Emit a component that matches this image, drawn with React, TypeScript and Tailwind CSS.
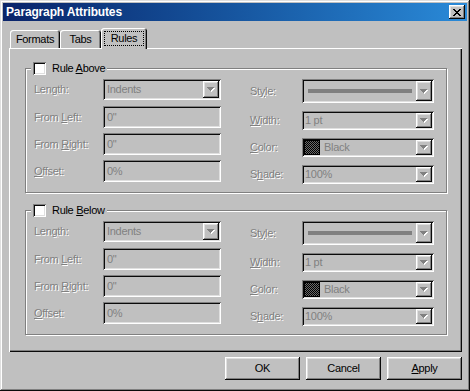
import React from "react";

const RAISED =
  "shadow-[inset_-1px_-1px_#0a0a0a,inset_1px_1px_#ffffff,inset_-2px_-2px_#808080,inset_2px_2px_#dfdfdf]";
const SUNKEN =
  "shadow-[inset_1px_1px_#808080,inset_-1px_-1px_#ffffff,inset_2px_2px_#0a0a0a,inset_-2px_-2px_#dfdfdf]";
const DIS = "text-[#808080] [text-shadow:1px_1px_0_#ffffff]";

function Lbl({ a, u, b }: { a: string; u: string; b: string }) {
  return (
    <span className={`whitespace-pre ${DIS}`}>
      {a}
      <span className="underline underline-offset-[1px]">{u}</span>
      {b}
    </span>
  );
}

function Arrow() {
  return (
    <svg width="8" height="5" viewBox="0 0 8 5" shapeRendering="crispEdges">
      <path d="M1 1h7v1H1zM2 2h5v1H2zM3 3h3v1H3zM4 4h1v1H4z" fill="#ffffff" />
      <path d="M0 0h7v1H0zM1 1h5v1H1zM2 2h3v1H2zM3 3h1v1H3z" fill="#808080" />
    </svg>
  );
}

function DropBtn() {
  return (
    <div className={`w-[16px] h-full shrink-0 flex items-center justify-center bg-[#c0c0c0] ${RAISED}`}>
      <Arrow />
    </div>
  );
}

function Swatch() {
  return (
    <svg width="16" height="15" viewBox="0 0 16 15" shapeRendering="crispEdges" className="shrink-0">
      <defs>
        <pattern id="chk" width="2" height="2" patternUnits="userSpaceOnUse">
          <rect width="2" height="2" fill="#6a6a6a" />
          <rect width="1" height="1" fill="#000000" />
          <rect x="1" y="1" width="1" height="1" fill="#000000" />
        </pattern>
      </defs>
      <rect x="0" y="0" width="16" height="15" fill="url(#chk)" />
      <rect x="0.5" y="0.5" width="15" height="14" fill="none" stroke="#000000" />
    </svg>
  );
}

function LeftRows() {
  return (
    <div className="flex flex-col gap-[5px] w-[187px] shrink-0">
      <div className="flex items-start h-[22px]">
        <div className="w-[69px] h-[21px] flex items-center">
          <Lbl a="Len" u="g" b="th:" />
        </div>
        <div className={`w-[118px] h-[21px] flex p-[2px] bg-[#c0c0c0] ${SUNKEN}`}>
          <div className="flex-1 flex items-center pl-[2px] text-[#808080]">Indents</div>
          <DropBtn />
        </div>
      </div>
      <div className="flex items-center h-[22px]">
        <div className="w-[69px]">
          <Lbl a="From " u="L" b="eft:" />
        </div>
        <div className={`w-[118px] h-[22px] flex items-center pl-[4px] text-[#808080] ${SUNKEN}`}>0"</div>
      </div>
      <div className="flex items-center h-[22px]">
        <div className="w-[69px]">
          <Lbl a="From " u="R" b="ight:" />
        </div>
        <div className={`w-[118px] h-[22px] flex items-center pl-[4px] text-[#808080] ${SUNKEN}`}>0"</div>
      </div>
      <div className="flex items-center h-[22px]">
        <div className="w-[69px]">
          <Lbl a="" u="O" b="ffset:" />
        </div>
        <div className={`w-[118px] h-[22px] flex items-center pl-[4px] text-[#808080] ${SUNKEN}`}>0%</div>
      </div>
    </div>
  );
}

function RightRows() {
  return (
    <div className="flex flex-col gap-[8px] ml-[29px] w-[184px] shrink-0">
      <div className="flex items-center h-[24px]">
        <div className="w-[52px]">
          <Lbl a="St" u="y" b="le:" />
        </div>
        <div className={`w-[132px] h-[24px] flex p-[2px] bg-[#c0c0c0] ${SUNKEN}`}>
          <div className="flex-1 flex items-center px-[4px]">
            <div className="h-[4px] w-full bg-[#808080]" />
          </div>
          <DropBtn />
        </div>
      </div>
      <div className="flex items-center h-[19px]">
        <div className="w-[52px]">
          <Lbl a="" u="W" b="idth:" />
        </div>
        <div className={`w-[132px] h-[19px] flex p-[2px] bg-[#c0c0c0] ${SUNKEN}`}>
          <div className="flex-1 flex items-center pl-[1px] text-[#808080]">1 pt</div>
          <DropBtn />
        </div>
      </div>
      <div className="flex items-center h-[19px]">
        <div className="w-[52px]">
          <Lbl a="" u="C" b="olor:" />
        </div>
        <div className={`w-[132px] h-[19px] flex p-[2px] bg-[#c0c0c0] ${SUNKEN}`}>
          <div className="flex-1 flex items-center gap-[4px] text-[#808080]">
            <Swatch />
            <span>Black</span>
          </div>
          <DropBtn />
        </div>
      </div>
      <div className="flex items-center h-[19px]">
        <div className="w-[52px]">
          <Lbl a="S" u="h" b="ade:" />
        </div>
        <div className={`w-[132px] h-[19px] flex p-[2px] bg-[#c0c0c0] ${SUNKEN}`}>
          <div className="flex-1 flex items-center pl-[1px] text-[#808080]">100%</div>
          <DropBtn />
        </div>
      </div>
    </div>
  );
}

function Group({ u, rest }: { u: string; rest: string }) {
  return (
    <div className="relative w-[422px] h-[125px] border border-[#808080] shadow-[1px_1px_0_#ffffff,inset_1px_1px_0_#ffffff] pt-[10px] pl-[8px] flex">
      <div className="absolute left-[5px] top-[-7px] h-[13px] flex items-center gap-[6px] px-[2px] bg-[#c0c0c0]">
        <div className={`w-[13px] h-[13px] bg-white ${SUNKEN}`} />
        <span className="whitespace-pre text-black">
          {"Rule "}
          <span className="underline underline-offset-[1px]">{u}</span>
          {rest}
        </span>
      </div>
      <LeftRows />
      <RightRows />
    </div>
  );
}

function CloseX() {
  return (
    <svg width="8" height="7" viewBox="0 0 8 7" shapeRendering="crispEdges">
      <path
        d="M0 0h2v1H0zM6 0h2v1H6zM1 1h2v1H1zM5 1h2v1H5zM2 2h4v1H2zM3 3h2v1H3zM2 4h4v1H2zM1 5h2v1H1zM5 5h2v1H5zM0 6h2v1H0zM6 6h2v1H6z"
        fill="#000000"
      />
    </svg>
  );
}

export default function App() {
  return (
    <div className="w-[470px] h-[391px] bg-[#c0c0c0] p-[3px] flex flex-col shadow-[inset_-1px_-1px_#0a0a0a,inset_1px_1px_#dfdfdf,inset_-2px_-2px_#808080,inset_2px_2px_#ffffff] font-['Liberation_Sans',Arial,sans-serif] text-[11px] tracking-[-0.3px] leading-none text-black select-none">
      <div className="h-[18px] shrink-0 flex items-center justify-between pl-[3px] pr-[2px] bg-linear-to-r from-[#0a246a] to-[#2a8ad8]">
        <span className="text-white font-bold text-[12px] tracking-[-0.15px]">Paragraph Attributes</span>
        <div className={`w-[16px] h-[14px] flex items-center justify-center bg-[#c0c0c0] ${RAISED}`}>
          <CloseX />
        </div>
      </div>

      <div className="mt-[7px] h-[20px] shrink-0 flex items-end pl-[7px]">
        <div className="w-[50px] h-[18px] flex items-center justify-center rounded-t-[3px] shadow-[inset_1px_1px_#ffffff,inset_-1px_0_#0a0a0a,inset_-2px_0_#808080]">
          Formats
        </div>
        <div className="w-[41px] h-[18px] flex items-center justify-center rounded-t-[3px] shadow-[inset_1px_1px_#ffffff,inset_-1px_0_#0a0a0a,inset_-2px_0_#808080]">
          Tabs
        </div>
        <div className="relative z-10 w-[46px] h-[21px] -mb-[1px] pt-[3px] px-[3px] pb-[3px] bg-[#c0c0c0] rounded-t-[3px] shadow-[inset_1px_1px_#ffffff,inset_-1px_0_#0a0a0a,inset_-2px_0_#808080]">
          <div className="h-full flex items-center justify-center border border-dotted border-black">Rules</div>
        </div>
      </div>

      <div className="relative ml-[6px] w-[453px] h-[304px] shrink-0 pt-[20px] pl-[16px] flex flex-col shadow-[inset_1px_1px_#ffffff,inset_-1px_-1px_#0a0a0a,inset_-2px_-2px_#808080]">
        <Group u="A" rest="bove" />
        <div className="h-[17px] shrink-0" />
        <Group u="B" rest="elow" />
      </div>

      <div className="mt-[5px] ml-[6px] w-[453px] flex justify-end gap-[6px]">
        <button className={`w-[75px] h-[23px] bg-[#c0c0c0] ${RAISED}`}>OK</button>
        <button className={`w-[75px] h-[23px] bg-[#c0c0c0] ${RAISED}`}>Cancel</button>
        <button className={`w-[75px] h-[23px] bg-[#c0c0c0] ${RAISED}`}>
          <span className="underline underline-offset-[1px]">A</span>pply
        </button>
      </div>
    </div>
  );
}
